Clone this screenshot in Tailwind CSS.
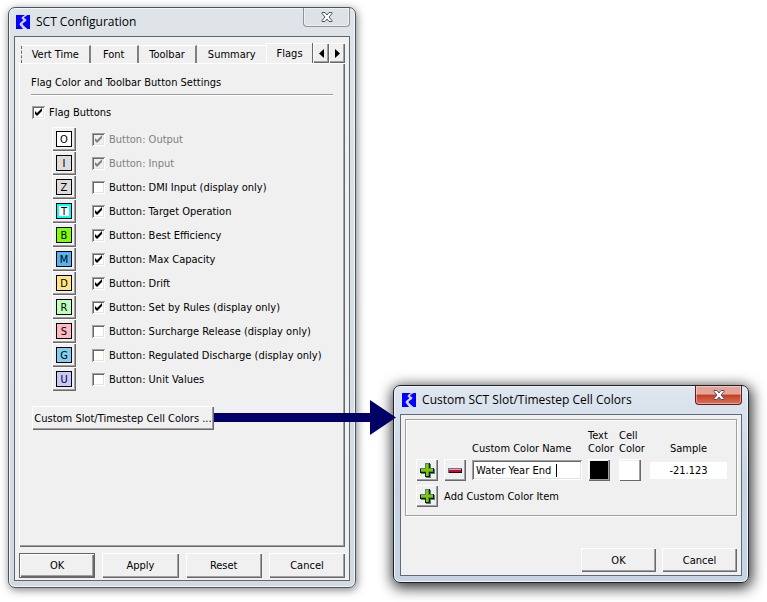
<!DOCTYPE html>
<html lang="en">
<head>
    <meta charset="UTF-8">
    <meta name="viewport" content="width=device-width, initial-scale=1.0">
    <title>SCT Configuration</title>
    <!-- Tailwind CSS -->
    <script src="https://cdn.jsdelivr.net/npm/@tailwindcss/browser@4"></script>
    <style>
        body { font-family: 'DejaVu Sans Condensed', 'DejaVu Sans', sans-serif; }
        h1, h2 { font-family: 'Open Sans', sans-serif; }
        /* Classic Windows bevels */
        .raised { background: #f0f0f0; box-shadow: inset 1px 1px #fff, inset -1px -1px #696969, inset -2px -2px #a0a0a0; }
        .default-btn { background: #f0f0f0; box-shadow: inset 0 0 0 1px #646464, inset 2px 2px #fff, inset -2px -2px #696969, inset -3px -3px #a0a0a0; }
        .sunken { box-shadow: inset 1px 1px #a0a0a0, inset -1px -1px #fff, inset 2px 2px #696969, inset -2px -2px #e3e3e3; }
    </style>
</head>
<body class="min-h-screen bg-white text-black text-[11px] leading-[13px]">

    <!-- Shared icons -->
    <svg class="hidden">
        <symbol id="logo" viewBox="0 0 14 14">
            <rect width="14" height="14" fill="#0000ff"/>
            <path d="M9 0h2.500L8.500 2 8 3l2.500 1.500-.5 1.500L6.500 8.500 7 10l4.500 4H7L5 11.500 3.500 9.500 4 8l3.500-3L5.500 3.500 6 2z" fill="#d4d4f6"/>
        </symbol>
        <symbol id="plus" viewBox="0 0 16 16">
            <path d="M7 2h5v5h4v5h-4v4H7v-4H2V7h5z" fill="#4f7f8c"/>
            <path d="M6 1h5v5h4v5h-4v4H6v-4H1V6h5z" fill="#0b1f1a"/>
            <path d="M6 1h4v5h4v1H9V2H7v5H1V6h5z" fill="#4f7f8c"/>
            <path d="M7 2h3v5h4v3h-4v4H7v-4H2V7h5z" fill="#5f9a00"/>
            <path d="M7 2h2v5h5v2H9v5H7V9H2V7h5z" fill="#84c800"/>
        </symbol>
        <symbol id="minus" viewBox="0 0 16 16">
            <path d="M1 6h14v5H1z" fill="#4f7f8c"/>
            <path d="M2 7h13v4H2z" fill="#111"/>
            <path d="M2 7h12v1H2z" fill="#ff9aa8"/>
            <path d="M2 8h12v2H2z" fill="#d80028"/>
        </symbol>
        <symbol id="close" viewBox="0 0 12 10">
            <path d="M1 .5h3L6 3 8 .5h3v1L8 5l3 3.500v1H8L6 7 4 9.500H1v-1L4 5 1 1.500z" fill="#fff" stroke="#4b5565"/>
        </symbol>
    </svg>

    <main class="flex min-h-screen items-start pt-[7px] pl-2 pr-[18px] pb-[14px] gap-[37px]">

        <!-- SCT Configuration -->
        <section class="flex-[349_1_0%] rounded-[7px] border border-[#4c555c] bg-linear-to-b from-[#dfe4e9] to-[#d3dae2] px-[5px] pb-[6px] shadow-[inset_0_0_0_1px_#f3f5f8,1px_2px_8px_rgba(0,0,0,0.5)]">
            <header class="flex h-7 items-start justify-between">
                <div class="flex items-center gap-[6px] pt-[5px] pl-[2px]">
                    <svg class="size-[14px]"><use href="#logo"/></svg>
                    <h1 class="text-[12px] leading-[18px]">SCT Configuration</h1>
                </div>
                <button aria-label="Close" class="flex h-[19px] w-[47px] items-center justify-center rounded-b-[4px] border border-t-0 border-[#8a949e] bg-[#dde2e7] shadow-[inset_0_0_0_1px_#eef1f4]">
                    <svg class="h-[10px] w-[12px]"><use href="#close"/></svg>
                </button>
            </header>

            <div class="border border-[#5f676e] bg-[#f0f0f0] px-1 pt-[6px] pb-[2px]">
                <!-- Tabs -->
                <div role="tablist" class="flex h-5 items-end">
                    <span class="h-[17px] w-[3px] border-r border-dashed border-[#696969]"></span>
                    <button role="tab" class="h-[18px] flex-[68_1_0%] whitespace-nowrap border-t border-r-2 border-t-white border-r-[#808080]">Vert Time</button>
                    <button role="tab" class="h-[18px] flex-[47_1_0%] border-t border-r-2 border-t-white border-r-[#808080]">Font</button>
                    <button role="tab" class="h-[18px] flex-[58_1_0%] border-t border-r-2 border-t-white border-r-[#808080]">Toolbar</button>
                    <button role="tab" class="h-[18px] flex-[70_1_0%] border-t border-t-white">Summary</button>
                    <button role="tab" aria-selected="true" class="h-5 flex-[46_1_0%] border-t border-l border-white">Flags</button>
                    <button aria-label="Scroll left" class="raised flex h-5 w-[17px] items-center justify-center border-l border-[#696969]">
                        <svg class="h-[9px] w-[5px]" viewBox="0 0 5 9"><path d="M5 0v9L0 4.500z"/></svg>
                    </button>
                    <button aria-label="Scroll right" class="raised flex h-5 w-4 items-center justify-center">
                        <svg class="h-[9px] w-[5px]" viewBox="0 0 5 9"><path d="M0 0v9l5-4.500z"/></svg>
                    </button>
                </div>

                <!-- Flags page -->
                <div class="raised pt-[13px] px-3 pb-[117px]">
                    <p>Flag Color and Toolbar Button Settings</p>
                    <hr class="mt-[5px] h-[2px] border-t border-b border-t-[#a0a0a0] border-b-white">
                    <div class="pl-px">
                        <label class="mt-[10px] flex items-center gap-1">
                            <span class="grid size-[13px]">
                                <input type="checkbox" checked class="peer sunken col-start-1 row-start-1 size-[13px] appearance-none bg-white">
                                <svg class="pointer-events-none invisible z-10 col-start-1 row-start-1 peer-checked:visible" viewBox="0 0 13 13"><path d="M3 5v3l2 2 5-5V2L5 7z"/></svg>
                            </span>
                            Flag Buttons
                        </label>
                        <div id="flagRows" class="mt-2 pl-5"></div>
                        <div class="relative mt-[15px] flex w-fit">
                            <button class="raised h-6 w-[182px] whitespace-nowrap">Custom Slot/Timestep Cell Colors ...</button>
                            <!-- Arrow to the dialog that the button opens -->
                            <svg class="absolute top-[-6px] left-full z-20 h-[35px] w-[182px]" viewBox="0 0 182 35"><path d="M0 13h156V0l26 17.500L156 35V22H0z" fill="#000066"/></svg>
                        </div>
                    </div>
                </div>

                <div class="mt-[6px] grid grid-cols-4 gap-[7px]">
                    <button class="default-btn h-[25px]">OK</button>
                    <button class="raised h-[25px]">Apply</button>
                    <button class="raised h-[25px]">Reset</button>
                    <button class="raised h-[25px]">Cancel</button>
                </div>
            </div>
        </section>

        <!-- Custom colors dialog -->
        <section class="flex-[355_1_0%] self-end mb-[5px] rounded-[7px] border border-[#1c2228] bg-linear-to-b from-[#dfe7ef] via-[#c5d3e3] to-[#c6d5e6] px-[6px] pb-[6px] shadow-[inset_0_0_0_1px_#f0f5fa,1px_3px_14px_2px_rgba(0,0,0,0.8)]">
            <header class="flex h-7 items-start justify-between">
                <div class="flex items-center gap-[6px] pt-[5px] pl-[2px]">
                    <svg class="size-[14px]"><use href="#logo"/></svg>
                    <h2 class="text-[12px] leading-[18px]">Custom SCT Slot/Timestep Cell Colors</h2>
                </div>
                <button aria-label="Close" class="flex h-[19px] w-[47px] items-center justify-center rounded-b-[4px] border border-t-0 border-[#5a2020] bg-linear-to-b from-[#e4a598] from-45% via-[#c23d22] via-50% to-[#d9705a] shadow-[inset_0_0_0_1px_rgba(255,255,255,0.4)]">
                    <svg class="h-[10px] w-[12px]"><use href="#close"/></svg>
                </button>
            </header>

            <div class="border border-[#5f6b78] bg-[#f0f0f0] p-1 pb-[3px]">
                <div class="border border-[#a0a0a0] pt-[9px] pr-[9px] pb-2 pl-[10px] shadow-[inset_1px_1px_#fff,1px_1px_#fff]">
                    <div class="grid grid-cols-[22px_22px_1fr_25px_25px_77px] items-center gap-x-[6px] gap-y-1">
                        <label for="colorName" class="col-start-3 self-end whitespace-nowrap">Custom Color Name</label>
                        <span>Text Color</span>
                        <span>Cell Color</span>
                        <span class="self-end text-center">Sample</span>

                        <button aria-label="Insert color" class="raised flex size-[22px] items-center justify-center"><svg class="size-4"><use href="#plus"/></svg></button>
                        <button aria-label="Remove color" class="raised flex size-[22px] items-center justify-center"><svg class="size-4"><use href="#minus"/></svg></button>
                        <div class="sunken flex h-5 items-center bg-white pl-1">
                            <input id="colorName" type="text" value="Water Year End" class="w-[80px] outline-none">
                            <span class="h-[13px] w-px bg-black"></span>
                        </div>
                        <button aria-label="Text color" class="raised size-[22px] p-[2px]"><span class="block size-[18px] bg-black"></span></button>
                        <button aria-label="Cell color" class="raised size-[22px] p-px"><span class="block size-[19px] bg-white"></span></button>
                        <output class="h-[17px] bg-white text-center leading-[17px]">-21.123</output>

                        <button id="addItem" class="raised flex size-[22px] items-center justify-center"><svg class="size-4"><use href="#plus"/></svg></button>
                        <label for="addItem" class="col-span-5">Add Custom Color Item</label>
                    </div>
                </div>
                <div class="mt-8 flex justify-end gap-[6px]">
                    <button class="raised h-6 w-[75px]">OK</button>
                    <button class="raised h-6 w-[75px]">Cancel</button>
                </div>
            </div>
        </section>
    </main>

    <script>
        const flags = [
            { key: 'O', name: 'Output', color: '#ffffff', checked: true, disabled: true },
            { key: 'I', name: 'Input', color: '#dcdcdc', checked: true, disabled: true },
            { key: 'Z', name: 'DMI Input (display only)', color: '#dcdcdc' },
            { key: 'T', name: 'Target Operation', color: '#ffffff', edge: '#00ffff', checked: true },
            { key: 'B', name: 'Best Efficiency', color: '#7fff00', checked: true },
            { key: 'M', name: 'Max Capacity', color: '#55b4f0', checked: true },
            { key: 'D', name: 'Drift', color: '#ffe682', checked: true },
            { key: 'R', name: 'Set by Rules (display only)', color: '#beffbe', checked: true },
            { key: 'S', name: 'Surcharge Release (display only)', color: '#ffb9c3' },
            { key: 'G', name: 'Regulated Discharge (display only)', color: '#82cdf0' },
            { key: 'U', name: 'Unit Values', color: '#c8c8ff' }
        ];

        document.getElementById('flagRows').innerHTML = flags.map(flag => `
            <div class="flex h-6 items-center gap-4">
                <button aria-label="${flag.name} color" class="raised flex size-6 items-center justify-center">
                    <span class="size-4 border border-black text-[11px] leading-4" style="background:${flag.color};box-shadow:inset 0 0 0 2px ${flag.edge || flag.color}">${flag.key}</span>
                </button>
                <label class="flex items-center gap-1 whitespace-nowrap ${flag.disabled ? 'text-[#808080]' : ''}">
                    <span class="grid size-[13px]">
                        <input type="checkbox" ${flag.checked ? 'checked' : ''} ${flag.disabled ? 'disabled' : ''} class="peer sunken col-start-1 row-start-1 size-[13px] appearance-none bg-white disabled:bg-[#f0f0f0]">
                        <svg class="pointer-events-none invisible z-10 col-start-1 row-start-1 peer-checked:visible" viewBox="0 0 13 13" fill="currentColor"><path d="M3 5v3l2 2 5-5V2L5 7z"/></svg>
                    </span>
                    Button: ${flag.name}
                </label>
            </div>`).join('');
    </script>
</body>
</html>
